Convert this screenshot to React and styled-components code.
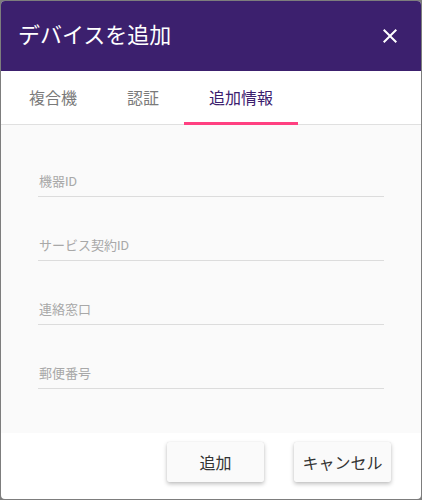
import React from "react";
import styled, { createGlobalStyle } from "styled-components";

const Global = createGlobalStyle`
  html, body { margin: 0; padding: 0; background: #7d7d7d; }
  body { font-family: Roboto, "Noto Sans CJK JP", sans-serif; }
  * { box-sizing: border-box; }
`;

const Page = styled.div`
  padding: 1px;
  height: 500px;
`;

const Dialog = styled.div`
  width: 420px;
  height: 498px;
  background: #fff;
  border-radius: 4px;
  overflow: hidden;
  display: flex;
  flex-direction: column;
`;

const Header = styled.div`
  height: 70px;
  background: #3c206e;
  display: flex;
  align-items: center;
  justify-content: space-between;
  padding: 0 19px 0 17px;
  flex: none;
`;

const Title = styled.h1`
  margin: 0;
  font-family: Roboto, "Noto Sans CJK JP", sans-serif;
  font-size: 22px;
  font-weight: 400;
  color: #fff;
  line-height: 1;
`;

const CloseButton = styled.button`
  background: none;
  border: none;
  padding: 0;
  width: 24px;
  height: 24px;
  display: flex;
  align-items: center;
  justify-content: center;
  cursor: pointer;
`;

const Tabs = styled.div`
  display: flex;
  height: 54px;
  padding-left: 3px;
  border-bottom: 1px solid #e0e0e0;
  flex: none;
`;

const Tab = styled.div`
  padding: 0 25px;
  display: flex;
  align-items: center;
  font-size: 16px;
  color: ${(p) => (p.$active ? "#3c206e" : "#7a7a7a")};
  border-bottom: 3px solid ${(p) => (p.$active ? "#ff4081" : "transparent")};
  padding-top: 0;
  margin-bottom: -1px;
`;

const Content = styled.div`
  flex: 1;
  background: #fafafa;
  padding: 40px 37px 0 37px;
  display: flex;
  flex-direction: column;
  gap: 32px;
`;

const Field = styled.div`
  height: 32px;
  border-bottom: 1px solid #dcdcdc;
  display: flex;
  align-items: flex-end;
  padding-bottom: 6px;
  font-size: 13px;
  color: #a8a8a8;
  padding-left: 1px;
`;

const Footer = styled.div`
  height: 66px;
  flex: none;
  display: flex;
  justify-content: flex-end;
  align-items: flex-start;
  padding: 9px 30px 0 0;
  gap: 30px;
`;

const Button = styled.button`
  width: 97px;
  height: 40px;
  border: none;
  border-radius: 2px;
  background: #fafafa;
  box-shadow: 0 2px 4px rgba(0, 0, 0, 0.25), 0 0 1px rgba(0, 0, 0, 0.12);
  font-family: Roboto, "Noto Sans CJK JP", sans-serif;
  font-size: 16px;
  color: #333;
  cursor: pointer;
  padding: 0;
`;

export default function App() {
  return (
    <>
      <Global />
      <Page>
        <Dialog>
          <Header>
            <Title>デバイスを追加</Title>
            <CloseButton aria-label="close">
              <svg width="24" height="24" viewBox="0 0 24 24">
                <path
                  d="M19 6.41L17.59 5 12 10.59 6.41 5 5 6.41 10.59 12 5 17.59 6.41 19 12 13.41 17.59 19 19 17.59 13.41 12z"
                  fill="#fff"
                />
              </svg>
            </CloseButton>
          </Header>
          <Tabs>
            <Tab>複合機</Tab>
            <Tab>認証</Tab>
            <Tab $active>追加情報</Tab>
          </Tabs>
          <Content>
            <Field>機器ID</Field>
            <Field>サービス契約ID</Field>
            <Field>連絡窓口</Field>
            <Field>郵便番号</Field>
          </Content>
          <Footer>
            <Button>追加</Button>
            <Button>キャンセル</Button>
          </Footer>
        </Dialog>
      </Page>
    </>
  );
}
